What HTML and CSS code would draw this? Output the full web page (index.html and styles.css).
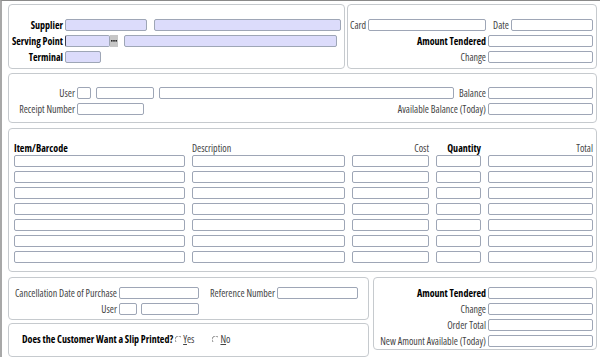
FILE: index.html
```html
<!DOCTYPE html>
<html>
<head>
<meta charset="utf-8">
<link rel="stylesheet" href="styles.css">
</head>
<body>
<div class="screen">
  <div class="row-top">
    <div class="panel p-supplier">
      <div class="line">
        <span class="lbl b w-sup">Supplier</span>
        <span class="fld lav" style="width:82px"></span>
        <span class="fld lav ml7" style="width:187px"></span>
      </div>
      <div class="line">
        <span class="lbl b w-sup">Serving Point</span>
        <span class="fld lav focus" style="width:45px"></span>
        <svg class="dots" width="8" height="12" viewBox="0 0 8 12"><rect x="0" y="0" width="8" height="12" fill="#c6c6c6"/><rect x="1" y="5" width="1.6" height="1.6" fill="#2a2a2a"/><rect x="3.2" y="5" width="1.6" height="1.6" fill="#2a2a2a"/><rect x="5.4" y="5" width="1.6" height="1.6" fill="#2a2a2a"/></svg>
        <span class="fld lav ml6" style="width:213px"></span>
      </div>
      <div class="line">
        <span class="lbl b w-sup">Terminal</span>
        <span class="fld lav" style="width:36px"></span>
      </div>
    </div>
    <div class="panel p-card">
      <div class="line">
        <span class="lbl w-card">Card</span>
        <span class="fld" style="width:118px"></span>
        <span class="lbl grow">Date</span>
        <span class="fld" style="width:82px"></span>
      </div>
      <div class="line">
        <span class="lbl b grow">Amount Tendered</span>
        <span class="fld w105"></span>
      </div>
      <div class="line">
        <span class="lbl grow">Change</span>
        <span class="fld w105"></span>
      </div>
    </div>
  </div>

  <div class="panel p-user">
    <div class="line">
      <span class="lbl w-user">User</span>
      <span class="fld" style="width:14px"></span>
      <span class="fld ml5" style="width:58px"></span>
      <span class="fld ml5" style="width:295px"></span>
      <span class="lbl grow">Balance</span>
      <span class="fld w105"></span>
    </div>
    <div class="line">
      <span class="lbl w-user">Receipt Number</span>
      <span class="fld" style="width:67px"></span>
      <span class="lbl grow">Available Balance (Today)</span>
      <span class="fld w105"></span>
    </div>
  </div>

  <div class="panel p-items">
    <div class="items-head">
      <span class="b">Item/Barcode</span>
      <span>Description</span>
      <span class="r">Cost</span>
      <span class="b r">Quantity</span>
      <span class="r">Total</span>
    </div>
    <div class="items-grid">
      <span class="fld"></span><span class="fld"></span><span class="fld"></span><span class="fld"></span><span class="fld"></span>
      <span class="fld"></span><span class="fld"></span><span class="fld"></span><span class="fld"></span><span class="fld"></span>
      <span class="fld"></span><span class="fld"></span><span class="fld"></span><span class="fld"></span><span class="fld"></span>
      <span class="fld"></span><span class="fld"></span><span class="fld"></span><span class="fld"></span><span class="fld"></span>
      <span class="fld"></span><span class="fld"></span><span class="fld"></span><span class="fld"></span><span class="fld"></span>
      <span class="fld"></span><span class="fld"></span><span class="fld"></span><span class="fld"></span><span class="fld"></span>
      <span class="fld"></span><span class="fld"></span><span class="fld"></span><span class="fld"></span><span class="fld"></span>
    </div>
  </div>

  <div class="row-bottom">
    <div class="col-left">
      <div class="panel p-cancel">
        <div class="line">
          <span class="lbl w-cancel">Cancellation Date of Purchase</span>
          <span class="fld" style="width:80px"></span>
          <span class="lbl w-ref">Reference Number</span>
          <span class="fld" style="width:81px"></span>
        </div>
        <div class="line">
          <span class="lbl w-cancel">User</span>
          <span class="fld" style="width:18px"></span>
          <span class="fld ml4" style="width:58px"></span>
        </div>
      </div>
      <div class="panel p-slip">
        <div class="line">
          <span class="b">Does the Customer Want a Slip Printed?</span>
          <svg class="radio" width="7" height="7" viewBox="0 0 7 7"><path d="M1 6 A3 3 0 0 1 6 1" fill="none" stroke="#8a8a8a" stroke-width="1"/></svg>
          <span class="opt"><u>Y</u>es</span>
          <svg class="radio radio-no" width="7" height="7" viewBox="0 0 7 7"><path d="M1 6 A3 3 0 0 1 6 1" fill="none" stroke="#8a8a8a" stroke-width="1"/></svg>
          <span class="opt"><u>N</u>o</span>
        </div>
      </div>
    </div>
    <div class="panel p-amount">
      <div class="line">
        <span class="lbl b grow">Amount Tendered</span>
        <span class="fld w105"></span>
      </div>
      <div class="line">
        <span class="lbl grow">Change</span>
        <span class="fld w105"></span>
      </div>
      <div class="line">
        <span class="lbl grow">Order Total</span>
        <span class="fld w105"></span>
      </div>
      <div class="line">
        <span class="lbl grow">New Amount Available (Today)</span>
        <span class="fld w105"></span>
      </div>
    </div>
  </div>
</div>
</body>
</html>
```

FILE: styles.css
```css
html, body {
  margin: 0;
  padding: 0;
  background: #ffffff;
}

body {
  font-family: "Open Sans", "Liberation Sans", Arial, sans-serif;
  font-stretch: 75%;
  font-size: 10px;
  color: #444444;
}

.screen {
  width: 600px;
  height: 357px;
  box-sizing: border-box;
  border-top: 1px solid #8a8a8a;
  border-left: 2px solid #a8a8a8;
  padding: 3px 3px 0 6px;
  display: flex;
  flex-direction: column;
  overflow: hidden;
}

.panel {
  box-sizing: border-box;
  border: 1px solid #c6cace;
  border-radius: 4px;
  background: #ffffff;
  display: flex;
  flex-direction: column;
  gap: 4px;
}

.row-top {
  display: flex;
  gap: 2px;
}

.p-supplier {
  width: 337px;
  height: 65px;
  padding-top: 14px;
}

.p-card {
  flex: 1;
  height: 65px;
  padding: 14px 3px 0 2px;
}

.p-user {
  margin-top: 4px;
  height: 50px;
  padding: 13px 3px 0 0;
}

.p-items {
  margin-top: 5px;
  height: 144px;
  padding: 13px 3px 0 5px;
  gap: 0;
}

.row-bottom {
  margin-top: 5px;
  display: flex;
  gap: 4px;
}

.col-left {
  width: 361px;
  display: flex;
  flex-direction: column;
  gap: 3px;
}

.p-cancel {
  height: 43px;
  padding-top: 9px;
}

.p-slip {
  height: 34px;
  padding: 9px 0 0 13px;
}

.p-amount {
  flex: 1;
  height: 73px;
  padding: 9px 3px 0 0;
}

.line {
  display: flex;
  align-items: center;
  height: 12px;
  line-height: 12px;
  white-space: nowrap;
}

.lbl {
  margin-right: 2px;
  text-align: right;
  flex-shrink: 0;
}

.grow {
  flex: 1;
}

.b {
  font-weight: bold;
  color: #000000;
}

.w-sup { width: 54px; }
.w-card { width: 16px; text-align: left; }
.w-user { width: 66px; }
.w-cancel { width: 108px; }
.w-ref { width: 65px; margin-left: 11px; }

.fld {
  display: block;
  box-sizing: border-box;
  height: 12px;
  border: 1px solid #9ea6b6;
  border-radius: 2px;
  background: #ffffff;
  flex-shrink: 0;
}

.lav {
  background: #dcdcfb;
}

.focus {
  border-left-color: #3c3c4c;
}

.w105 { width: 105px; }
.ml4 { margin-left: 4px; }
.ml5 { margin-left: 5px; }
.ml6 { margin-left: 6px; }
.ml7 { margin-left: 7px; }

.dots {
  display: block;
  flex-shrink: 0;
}

.items-head {
  display: grid;
  grid-template-columns: 171px 153px 77px 45px 105px;
  column-gap: 7px;
  height: 13px;
  line-height: 13px;
}

.items-head .r {
  text-align: right;
}

.items-grid {
  display: grid;
  grid-template-columns: 171px 153px 77px 45px 105px;
  grid-auto-rows: 12px;
  column-gap: 7px;
  row-gap: 4px;
}

.radio {
  display: block;
  margin-left: 2px;
  margin-right: 1px;
  flex-shrink: 0;
}

.radio.radio-no {
  margin-left: 18px;
}

.opt {
  color: #444444;
}
```
